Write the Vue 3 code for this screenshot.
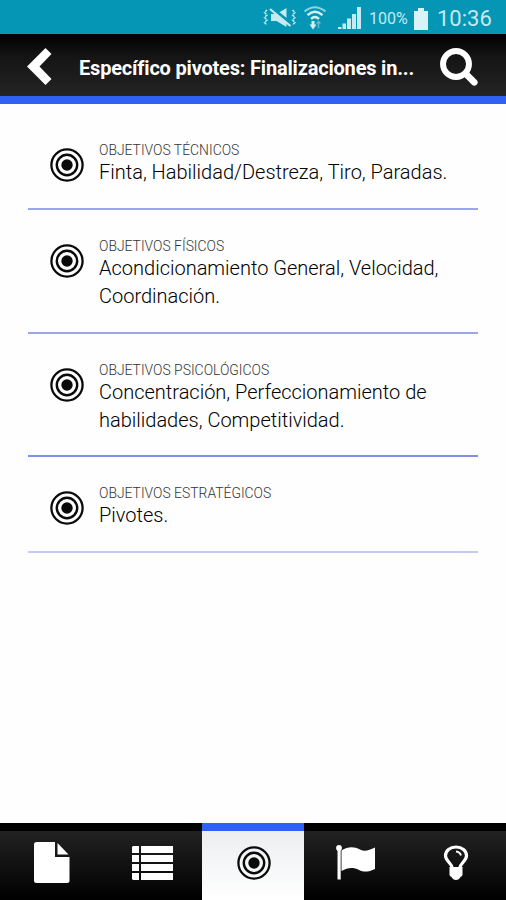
<script setup>
import { h } from 'vue'

const goals = [
  { label: 'OBJETIVOS TÉCNICOS', lines: ['Finta, Habilidad/Destreza, Tiro, Paradas.'], tone: 'mid' },
  { label: 'OBJETIVOS FÍSICOS', lines: ['Acondicionamiento General, Velocidad,', 'Coordinación.'], tone: 'mid' },
  { label: 'OBJETIVOS PSICOLÓGICOS', lines: ['Concentración, Perfeccionamiento de', 'habilidades, Competitividad.'], tone: 'strong' },
  { label: 'OBJETIVOS ESTRATÉGICOS', lines: ['Pivotes.'], tone: 'soft' }
]

const TargetIcon = () =>
  h('svg', { width: 34, height: 34, viewBox: '0 0 34 34', fill: 'none', stroke: '#0a0a0a' }, [
    h('circle', { cx: 17, cy: 17, r: 15.6, 'stroke-width': 2.3 }),
    h('circle', { cx: 17, cy: 17, r: 10.2, 'stroke-width': 2.4 }),
    h('circle', { cx: 17, cy: 17, r: 5.7, fill: '#0a0a0a', stroke: 'none' })
  ])
</script>

<template>
  <div class="screen">
    <div class="status">
      <svg class="mute" width="34" height="22" viewBox="0 0 34 22">
        <path d="M9 7h5.500L24.500 1v19L14.500 14H9z" fill="#c5eaf0" />
        <path d="M9.500 0.500l20.500 17" stroke="#0496b4" stroke-width="3" />
        <path d="M8 2l20.500 17" stroke="#c5eaf0" stroke-width="2.200" />
        <path d="M5 3l-2.500 2.500 2.500 2.500-2.500 2.500 2.500 2.500-2.500 2.500 2.500 2.500M30.500 3l2.500 2.500-2.500 2.500 2.500 2.500-2.500 2.500 2.500 2.500-2.500 2.500" fill="none" stroke="#c5eaf0" stroke-width="1.500" stroke-dasharray="2.600 0.900" />
      </svg>
      <svg class="wifi" width="24" height="24" viewBox="0 0 24 24" fill="none" stroke-width="2">
        <path d="M1.500 5.500Q12-3 22.500 5.500" stroke="#8fd2de" />
        <path d="M4.500 9.200Q12 2.500 19.500 9.200M8 12.800Q12 9 16 12.800" stroke="#d5f0f4" stroke-width="2.400" />
        <path d="M10 15v5" stroke="#d5f0f4" stroke-width="3" />
        <path d="M6.500 18.500h7L10 23.500z" fill="#d5f0f4" />
        <path d="M15.500 22v-6M13.500 17.500l2-2 2 2" stroke="#5fbdcd" stroke-width="1.500" />
      </svg>
      <svg class="signal" width="24" height="24" viewBox="0 0 24 24" fill="#c5eaf0">
        <path d="M0 21h3.500v2H0zM4.500 17.500h3.500V23H4.500zM9 12.500h4V23H9zM14 8h4v15h-4zM19 1h4v22h-4z" />
      </svg>
      <span class="percent">100%</span>
      <svg class="battery" width="14" height="23" viewBox="0 0 14 23">
        <path d="M4 1h6v3h4v19H0V4h4z" fill="#d9f3f6" />
      </svg>
      <span class="clock">10:36</span>
    </div>

    <header class="bar">
      <svg class="back" width="25" height="37" viewBox="0 0 25 37">
        <path d="M18.500 0L24.500 6 12.500 18.500 24.500 31 18.500 37 0 18.500z" fill="#fff" />
      </svg>
      <h1 class="title">Específico pivotes: Finalizaciones in...</h1>
      <svg class="search" width="38" height="38" viewBox="0 0 38 38" fill="none" stroke="#fff">
        <circle cx="16" cy="16" r="13" stroke-width="5.900" />
        <path d="M26 26l8.300 8.300" stroke-width="6.600" stroke-linecap="round" />
      </svg>
    </header>

    <main class="list">
      <section v-for="goal in goals" :key="goal.label" class="goal" :class="goal.tone">
        <TargetIcon class="goal-icon" />
        <div>
          <h2 class="label">{{ goal.label }}</h2>
          <p v-for="line in goal.lines" :key="line" class="line">{{ line }}</p>
        </div>
      </section>
    </main>

    <nav class="tabs">
      <div class="tab">
        <svg class="file" width="36" height="42" viewBox="0 0 36 42" fill="#fff">
          <path d="M2.500 0H21V15H35.500V38.500Q35.500 41 33 41H2.500Q0 41 0 38.500V2.500Q0 0 2.500 0z" />
          <path d="M23.500 1L34.500 12.500H23.500z" />
        </svg>
      </div>
      <div class="tab">
        <svg class="rows" width="42" height="34" viewBox="0 0 42 34" fill="#fff">
          <path d="M1 0H7V7H0V1zM9 0H41V7H9zM0 9H7V16H0zM9 9H41V16H9zM0 18H7V25H0zM9 18H41V25H9zM0 27H7V34H1L0 33zM9 27H41V34H9z" />
        </svg>
      </div>
      <div class="tab active"><TargetIcon class="current" /></div>
      <div class="tab">
        <svg class="flag" width="40" height="36" viewBox="0 0 40 36" fill="#fff">
          <circle cx="3" cy="3" r="2.900" />
          <path d="M1.500 3H4.700V34.500H1.500z" />
          <path d="M5.500 5.500C12 1.500 18 1.500 24 4.500C29 7 33 5 39 2.500V24C33 27 28 27.500 23 25C17 22 12 22.500 5.500 26z" />
        </svg>
      </div>
      <div class="tab">
        <svg class="bulb" width="26" height="36" viewBox="0 0 26 36" fill="none" stroke="#fff">
          <path d="M9 22.500C8.500 18 2.500 16 2.500 10.800C2.500 5.500 7 2 13 2S23.500 5.500 23.500 10.800C23.500 16 17.500 18 17 22.500" stroke-width="3.200" />
          <path d="M13 6.500Q17 7 18 10.500" stroke-width="1.800" />
          <path d="M6.500 22H19.500V30Q19 31.500 17.500 32Q16 35 13 35T8.500 32Q7 31.500 6.500 30z" fill="#fff" stroke="none" />
        </svg>
      </div>
    </nav>
  </div>
</template>

<style>
body { background: #fff; }
</style>

<style scoped>
.screen {
  display: flex;
  flex-direction: column;
  width: 506px;
  height: 900px;
  overflow: hidden;
  background: #fefefe;
  font-family: Roboto, "Liberation Sans", sans-serif;
}
svg { display: block; flex: none; }
.status {
  display: flex;
  align-items: center;
  box-sizing: border-box;
  height: 34px;
  padding: 2px 0 0 262px;
  background: #0496b4;
  color: #c5eaf0;
  line-height: 32px;
  white-space: nowrap;
}
.wifi { margin-left: 7px; }
.signal { margin-left: 11px; }
.percent { width: 39px; margin: 2px 0 0 7px; font-size: 16px; }
.battery { margin-left: 6px; }
.clock { margin: 2px 0 0 9px; font-size: 22px; }
.bar {
  display: flex;
  align-items: center;
  box-sizing: border-box;
  height: 70px;
  padding-left: 27px;
  border-bottom: 8px solid #2f62f3;
  background: linear-gradient(#000, #141414 35%, #242424);
}
.back { margin-top: 3px; }
.title {
  width: 336px;
  margin: 6px 0 0 27px;
  color: #fff;
  font-size: 20px;
  font-weight: 700;
  letter-spacing: -0.19px;
  line-height: 28px;
  white-space: nowrap;
}
.search { margin: 4px 0 0 25px; }
.list { flex: 1; padding: 10px 28px 0; }
.goal {
  display: flex;
  padding: 28px 0 22px 22px;
  border-bottom: 2px solid #9ba6f0;
}
.goal.strong { padding-bottom: 21px; border-color: #8090e8; }
.goal.soft { border-color: #c5caf4; }
.goal-icon { margin: 6px 15px 0 0; }
.label {
  margin: 0;
  color: #333;
  font-size: 13.9px;
  font-weight: 300;
  line-height: 16px;
  white-space: nowrap;
}
.line {
  margin: 0;
  color: #000;
  font-size: 20px;
  font-weight: 300;
  line-height: 28px;
  white-space: nowrap;
}
.tabs {
  display: grid;
  grid-template-columns: repeat(5, 1fr);
  height: 77px;
  background: #000;
}
.tab {
  display: flex;
  align-items: center;
  justify-content: center;
  border-top: 8px solid #000;
  padding-bottom: 6px;
  background: linear-gradient(#222, #000);
}
.tab.active {
  border-top-color: #2f62f3;
  background: linear-gradient(#eceef0, #fff);
}
.file, .rows, .bulb, .current { margin-left: 2px; }
.flag { margin-left: 4px; }
</style>
